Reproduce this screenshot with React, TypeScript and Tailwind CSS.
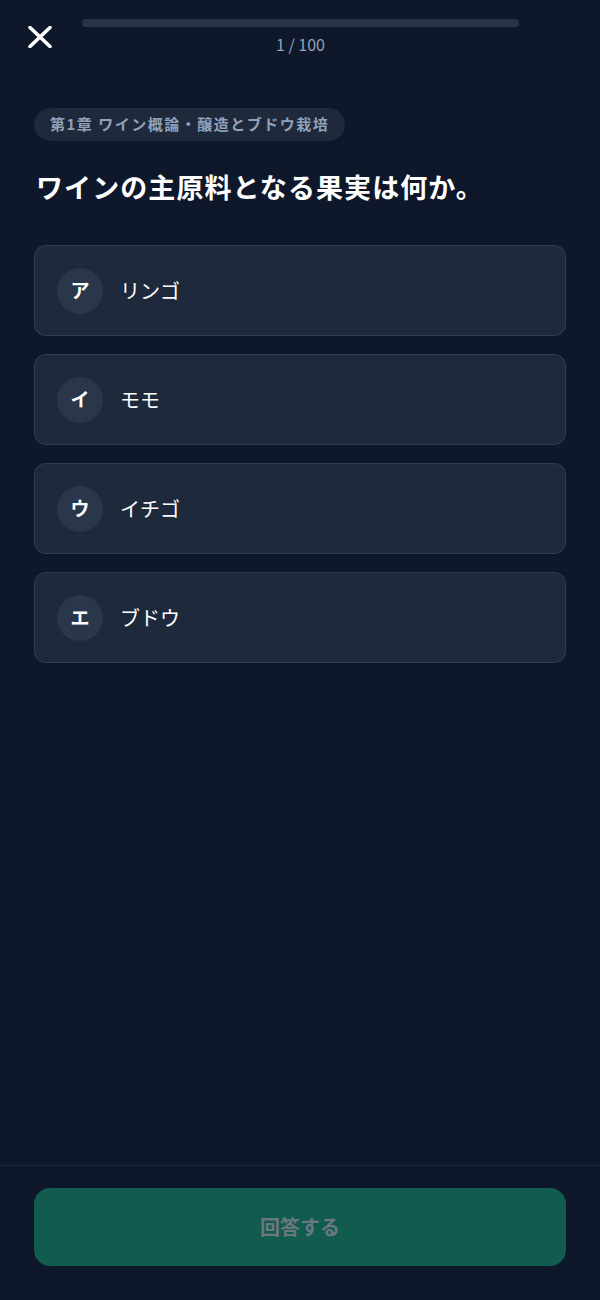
const options = [
  { key: 'ア', label: 'リンゴ' },
  { key: 'イ', label: 'モモ' },
  { key: 'ウ', label: 'イチゴ' },
  { key: 'エ', label: 'ブドウ' },
];

export default function App() {
  const current = 1;
  const total = 100;

  return (
    <div
      className="min-h-screen flex flex-col bg-[#0f172a] text-white"
      style={{ fontFamily: '"Noto Sans CJK JP", "Noto Sans", sans-serif' }}
    >
      {/* header */}
      <div className="flex pt-[19px]">
        <div className="w-[82px] flex pl-[28px] pt-[7px]">
          <svg width="24" height="22" viewBox="0 0 24 22" fill="none">
            <path d="M2 1.5 L22 20.5 M22 1.5 L2 20.5" stroke="white" strokeWidth="3.6" strokeLinecap="round" />
          </svg>
        </div>
        <div className="flex-1 flex flex-col items-center">
          <div className="w-full h-2 rounded-full bg-[#2a3446] overflow-hidden">
            <div className="h-full bg-emerald-500" style={{ width: `${(current / total) * 0}%` }} />
          </div>
          <div className="mt-[7px] text-[16px] leading-5 text-[#94a3b8]">
            {current} / {total}
          </div>
        </div>
        <div className="w-[81px]" />
      </div>

      <main className="px-[34px] pt-[54px]">
        <span className="inline-flex items-center h-[33px] px-4 rounded-full bg-[#1e293b] text-[15px] tracking-[0.1em] font-bold text-slate-400">
          第1章 ワイン概論・醸造とブドウ栽培
        </span>

        <h1 className="mt-[28px] ml-[2px] text-[27px] leading-9 font-bold tracking-[0.04em]">
          ワインの主原料となる果実は何か。
        </h1>

        <div className="mt-[40px] flex flex-col gap-[18px]">
          {options.map((o) => (
            <button
              key={o.key}
              className="h-[91px] flex items-center gap-[17px] px-[22px] rounded-xl border border-[#334155]/80 bg-[#1e293b] text-left"
            >
              <span className="w-[46px] h-[46px] rounded-full bg-[#2a3649] flex items-center justify-center text-[19px] font-bold">
                {o.key}
              </span>
              <span className="text-[20px]">{o.label}</span>
            </button>
          ))}
        </div>
      </main>

      <footer className="mt-auto border-t border-[#1e293b] px-[34px] pt-[22px] pb-[34px]">
        <button className="w-full h-[78px] rounded-2xl bg-[#115c4e] text-[20px] font-bold text-[#6b7780]">
          回答する
        </button>
      </footer>
    </div>
  );
}
